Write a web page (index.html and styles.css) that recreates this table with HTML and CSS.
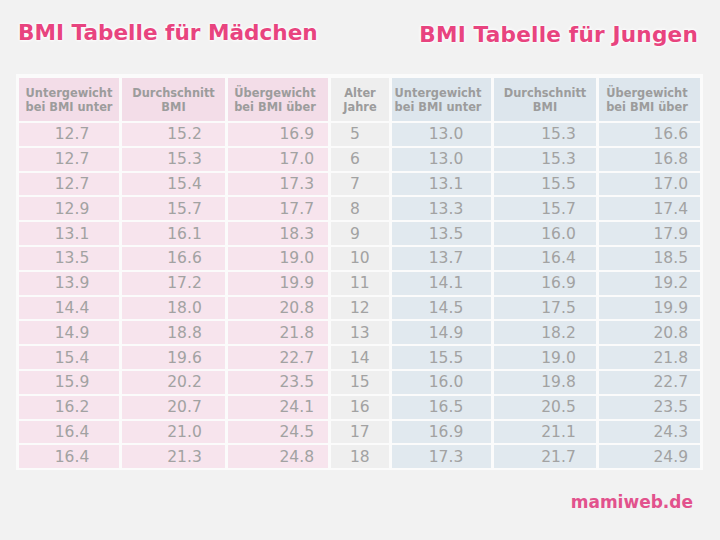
FILE: index.html
```html
<!DOCTYPE html>
<html lang="de">
<head>
<meta charset="utf-8">
<title>BMI Tabelle</title>
<link rel="stylesheet" href="styles.css">
</head>
<body>
<div class="page">
  <header class="titles">
    <h1 class="title">BMI Tabelle für Mädchen</h1>
    <h1 class="title title-boys">BMI Tabelle für Jungen</h1>
  </header>
  <table class="bmi">
    <thead>
      <tr>
        <th class="g c1">Untergewicht<br>bei BMI unter</th>
        <th class="g c2">Durchschnitt<br>BMI</th>
        <th class="g c3">Übergewicht<br>bei BMI über</th>
        <th class="age">Alter<br>Jahre</th>
        <th class="b c5">Untergewicht<br>bei BMI unter</th>
        <th class="b c6">Durchschnitt<br>BMI</th>
        <th class="b c7">Übergewicht<br>bei BMI über</th>
      </tr>
    </thead>
    <tbody>
      <tr><td class="g c1">12.7</td><td class="g c2">15.2</td><td class="g c3">16.9</td><td class="age">5</td><td class="b c5">13.0</td><td class="b c6">15.3</td><td class="b c7">16.6</td></tr>
      <tr><td class="g c1">12.7</td><td class="g c2">15.3</td><td class="g c3">17.0</td><td class="age">6</td><td class="b c5">13.0</td><td class="b c6">15.3</td><td class="b c7">16.8</td></tr>
      <tr><td class="g c1">12.7</td><td class="g c2">15.4</td><td class="g c3">17.3</td><td class="age">7</td><td class="b c5">13.1</td><td class="b c6">15.5</td><td class="b c7">17.0</td></tr>
      <tr><td class="g c1">12.9</td><td class="g c2">15.7</td><td class="g c3">17.7</td><td class="age">8</td><td class="b c5">13.3</td><td class="b c6">15.7</td><td class="b c7">17.4</td></tr>
      <tr><td class="g c1">13.1</td><td class="g c2">16.1</td><td class="g c3">18.3</td><td class="age">9</td><td class="b c5">13.5</td><td class="b c6">16.0</td><td class="b c7">17.9</td></tr>
      <tr><td class="g c1">13.5</td><td class="g c2">16.6</td><td class="g c3">19.0</td><td class="age">10</td><td class="b c5">13.7</td><td class="b c6">16.4</td><td class="b c7">18.5</td></tr>
      <tr><td class="g c1">13.9</td><td class="g c2">17.2</td><td class="g c3">19.9</td><td class="age">11</td><td class="b c5">14.1</td><td class="b c6">16.9</td><td class="b c7">19.2</td></tr>
      <tr><td class="g c1">14.4</td><td class="g c2">18.0</td><td class="g c3">20.8</td><td class="age">12</td><td class="b c5">14.5</td><td class="b c6">17.5</td><td class="b c7">19.9</td></tr>
      <tr><td class="g c1">14.9</td><td class="g c2">18.8</td><td class="g c3">21.8</td><td class="age">13</td><td class="b c5">14.9</td><td class="b c6">18.2</td><td class="b c7">20.8</td></tr>
      <tr><td class="g c1">15.4</td><td class="g c2">19.6</td><td class="g c3">22.7</td><td class="age">14</td><td class="b c5">15.5</td><td class="b c6">19.0</td><td class="b c7">21.8</td></tr>
      <tr><td class="g c1">15.9</td><td class="g c2">20.2</td><td class="g c3">23.5</td><td class="age">15</td><td class="b c5">16.0</td><td class="b c6">19.8</td><td class="b c7">22.7</td></tr>
      <tr><td class="g c1">16.2</td><td class="g c2">20.7</td><td class="g c3">24.1</td><td class="age">16</td><td class="b c5">16.5</td><td class="b c6">20.5</td><td class="b c7">23.5</td></tr>
      <tr><td class="g c1">16.4</td><td class="g c2">21.0</td><td class="g c3">24.5</td><td class="age">17</td><td class="b c5">16.9</td><td class="b c6">21.1</td><td class="b c7">24.3</td></tr>
      <tr><td class="g c1">16.4</td><td class="g c2">21.3</td><td class="g c3">24.8</td><td class="age">18</td><td class="b c5">17.3</td><td class="b c6">21.7</td><td class="b c7">24.9</td></tr>
    </tbody>
  </table>
  <footer class="brand">mamiweb.de</footer>
</div>
</body>
</html>
```

FILE: styles.css
```css
html, body {
  margin: 0;
  padding: 0;
  background: #f2f2f2;
}

.page {
  width: 720px;
  height: 540px;
  box-sizing: border-box;
  padding-top: 21px;
  font-family: "DejaVu Sans", Verdana, sans-serif;
}

.titles {
  display: flex;
  justify-content: space-between;
  align-items: flex-start;
  padding: 0 22px 0 18px;
  height: 53px;
}

.title {
  margin: 0;
  font-family: "DejaVu Sans", Verdana, sans-serif;
  font-weight: bold;
  font-size: 21.6px;
  line-height: 24px;
  color: #e8447f;
  text-shadow: 0 0 2px #fff, 0 0 3px #fff, 0 0 4px #fff;
}

.title-boys {
  margin-top: 2px;
  letter-spacing: 0.2px;
}

.bmi {
  margin-left: 16px;
  border-collapse: separate;
  border-spacing: 3px 2px;
  padding-top: 2px;
  background: #fbfbfb;
  table-layout: fixed;
}

.bmi th {
  height: 43px;
  padding: 0;
  font-size: 11.4px;
  line-height: 14px;
  font-weight: bold;
  color: #9c9c9c;
  text-align: center;
  vertical-align: middle;
}

.bmi td {
  height: 22.8px;
  padding: 0;
  font-size: 15.5px;
  line-height: 20px;
  color: #a2a2a2;
  vertical-align: middle;
}

.bmi th.g { background: #f3dde8; }
.bmi td.g { background: #f7e4ed; }
.bmi th.b { background: #dde6ed; }
.bmi td.b { background: #e1e9ef; }
.bmi th.age { background: #eeeeee; }
.bmi td.age { background: #efefef; }

.c1 { width: 100px; }
.c2 { width: 103px; }
.c3 { width: 100px; }
.age { width: 58px; }
.c5 { width: 99px; }
.c6 { width: 102px; }
.c7 { width: 101px; }

td.c1 { text-align: center; padding-left: 6px !important; width: 94px; }
td.c2 { text-align: center; padding-left: 22px !important; width: 81px; }
td.c3 { text-align: right; padding-right: 14px !important; width: 86px; }
td.age { text-align: left; padding-left: 19px !important; width: 39px; }
td.c5 { text-align: center; padding-left: 9px !important; width: 90px; }
td.c6 { text-align: center; padding-left: 27px !important; width: 75px; }
td.c7 { text-align: right; padding-right: 12px !important; width: 89px; }

th.c3 { padding-right: 6px !important; width: 94px; }
th.c5 { padding-right: 7px !important; width: 92px; }
th.c7 { padding-right: 5px !important; width: 96px; }

.brand {
  display: flex;
  justify-content: flex-end;
  margin-top: 22px;
  padding-right: 27px;
  font-family: "DejaVu Sans", Verdana, sans-serif;
  font-weight: bold;
  font-size: 17px;
  line-height: 20px;
  color: #e2528d;
}
```
